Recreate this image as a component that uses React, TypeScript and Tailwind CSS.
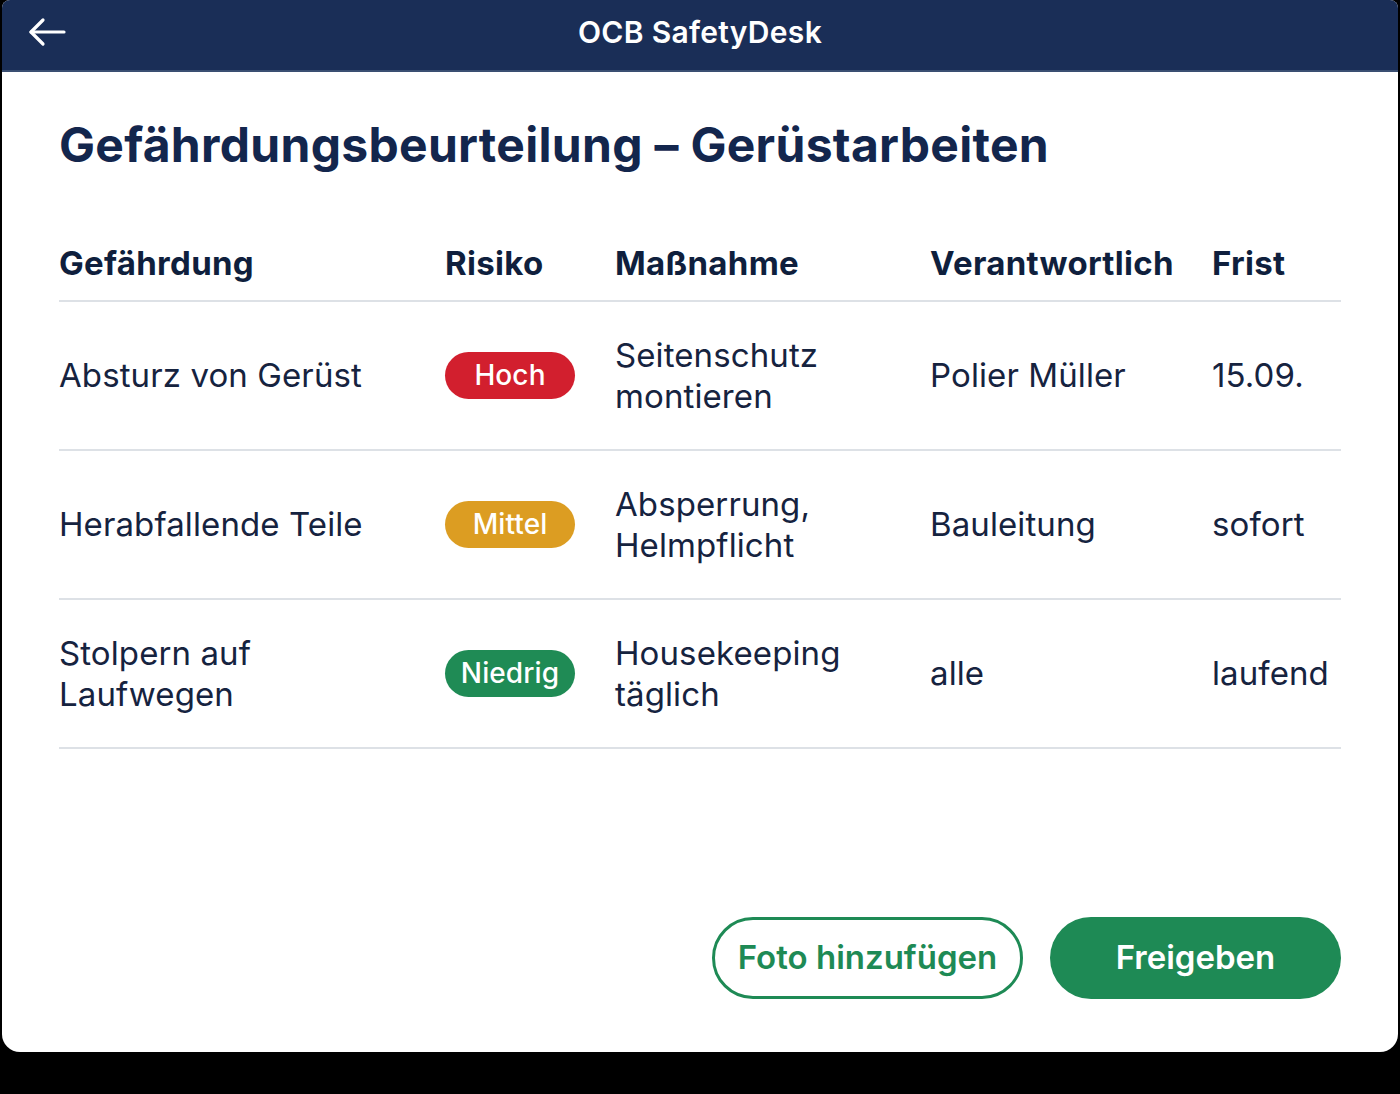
import React from 'react';

type Risk = 'Hoch' | 'Mittel' | 'Niedrig';

interface Row {
  hazard: string[];
  risk: Risk;
  measure: string[];
  owner: string;
  due: string;
}

const ROWS: Row[] = [
  { hazard: ['Absturz von Gerüst'], risk: 'Hoch', measure: ['Seitenschutz', 'montieren'], owner: 'Polier Müller', due: '15.09.' },
  { hazard: ['Herabfallende Teile'], risk: 'Mittel', measure: ['Absperrung,', 'Helmpflicht'], owner: 'Bauleitung', due: 'sofort' },
  { hazard: ['Stolpern auf', 'Laufwegen'], risk: 'Niedrig', measure: ['Housekeeping', 'täglich'], owner: 'alle', due: 'laufend' },
];

const riskColors: Record<Risk, string> = {
  Hoch: 'bg-[#d21f2e]',
  Mittel: 'bg-[#dc9d22]',
  Niedrig: 'bg-[#1f8b55]',
};

const cols = 'grid grid-cols-[386px_170px_315px_282px_1fr]';

const BackArrow: React.FC = () => (
  <svg width="40" height="32" viewBox="0 0 40 32" fill="none" stroke="white" strokeWidth="3.2" strokeLinecap="round" strokeLinejoin="round">
    <path d="M37 16H4" />
    <path d="M16 4L4 16l12 12" />
  </svg>
);

const App: React.FC = () => {
  return (
    <div className="bg-black h-[1094px] w-full font-['Inter',sans-serif]">
      <div className="mx-[2px] h-[1052px] bg-white rounded-t-[8px] rounded-b-[18px] overflow-hidden flex flex-col">
        <header className="relative h-[72px] bg-[#1a2e57] border-b-2 border-[#3a4f72] flex items-center justify-center shrink-0">
          <button className="absolute left-[25px] top-[16px]" aria-label="Zurück">
            <BackArrow />
          </button>
          <h1 className="text-white text-[30px] font-semibold tracking-[0.3px] -mt-[6px]">OCB SafetyDesk</h1>
        </header>

        <main className="flex-1 flex flex-col px-[57px]">
          <h2 className="mt-[44px] text-[48px] leading-[58px] font-bold text-[#13264d] tracking-[0.3px]">
            Gefährdungsbeurteilung – Gerüstarbeiten
          </h2>

          <div className="mt-[67px]">
            <div className={`${cols} pt-[2px] pb-[17px] border-b-2 border-[#dde1e6] text-[33px] leading-[40px] font-bold text-[#0f1f3d] tracking-[0.3px]`}>
              <div>Gefährdung</div>
              <div>Risiko</div>
              <div>Maßnahme</div>
              <div>Verantwortlich</div>
              <div>Frist</div>
            </div>
            {ROWS.map((row, i) => (
              <div key={i} className={`${cols} h-[149px] items-center border-b-2 border-[#dde1e6] text-[33px] leading-[41px] text-[#16233f] tracking-[0.1px]`}>
                <div>
                  {row.hazard.map(l => (
                    <div key={l}>{l}</div>
                  ))}
                </div>
                <div>
                  <span className={`inline-flex items-center justify-center w-[130px] h-[47px] rounded-full text-white text-[28px] font-medium ${riskColors[row.risk]}`}>
                    {row.risk}
                  </span>
                </div>
                <div>
                  {row.measure.map(l => (
                    <div key={l}>{l}</div>
                  ))}
                </div>
                <div>{row.owner}</div>
                <div>{row.due}</div>
              </div>
            ))}
          </div>

          <div className="flex-1" />

          <div className="flex justify-end gap-[27px] pb-[53px]">
            <button className="w-[311px] h-[82px] rounded-full border-[3px] border-[#1e8a55] text-[#1e8a55] text-[33px] font-semibold">
              Foto hinzufügen
            </button>
            <button className="w-[291px] h-[82px] rounded-full bg-[#1e8a55] text-white text-[33px] font-semibold">
              Freigeben
            </button>
          </div>
        </main>
      </div>
    </div>
  );
};

export default App;
